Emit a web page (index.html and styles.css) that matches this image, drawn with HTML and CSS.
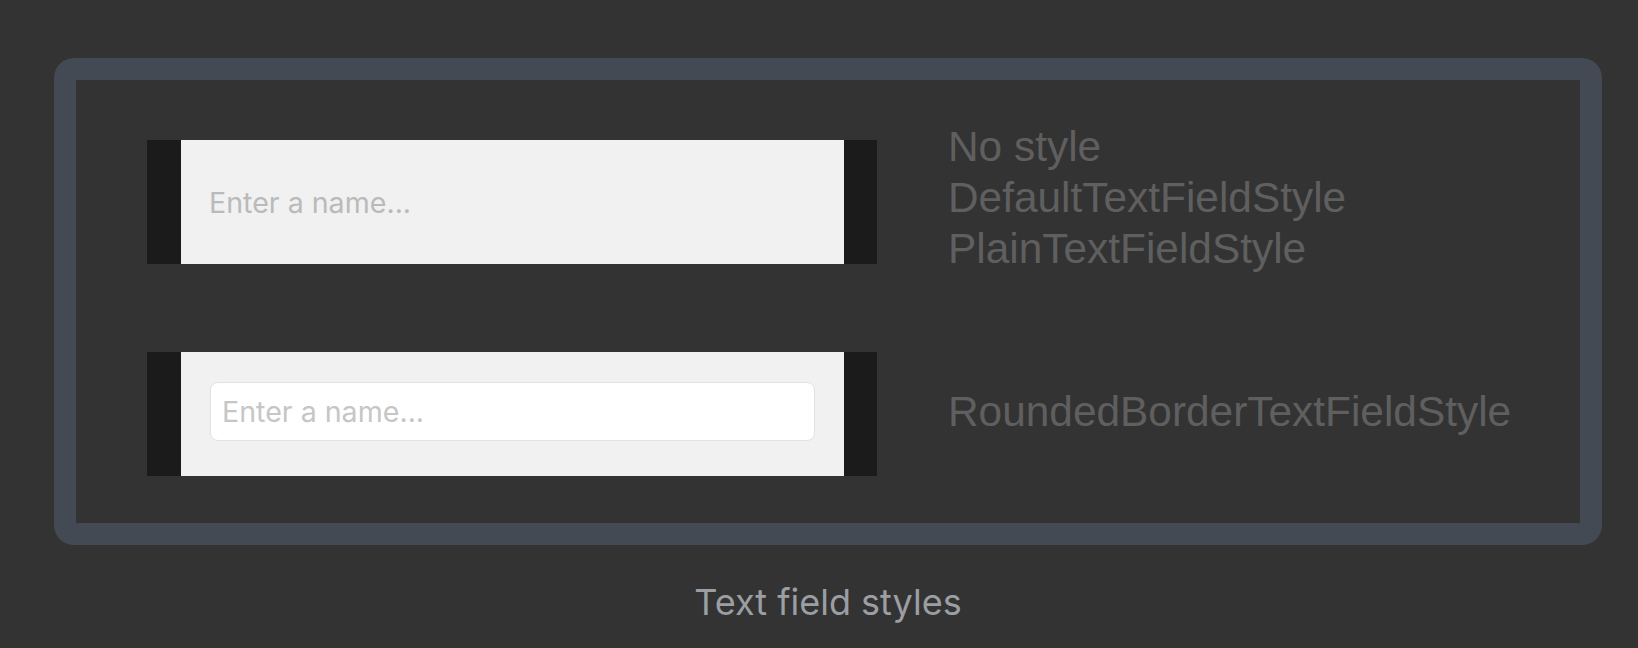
FILE: index.html
```html
<!DOCTYPE html>
<html>
<head>
<meta charset="utf-8">
<link rel="stylesheet" href="styles.css">
</head>
<body>
<div class="page">
  <div class="frame">
    <div class="row row-first">
      <div class="field">
        <div class="field-inner">
          <span class="placeholder">Enter a name...</span>
        </div>
      </div>
      <div class="labels labels-first">
        <div>No style</div>
        <div>DefaultTextFieldStyle</div>
        <div>PlainTextFieldStyle</div>
      </div>
    </div>
    <div class="row row-second">
      <div class="field">
        <div class="field-inner">
          <div class="rounded-box">
            <span class="placeholder placeholder-light">Enter a name...</span>
          </div>
        </div>
      </div>
      <div class="labels labels-second">
        <div>RoundedBorderTextFieldStyle</div>
      </div>
    </div>
  </div>
  <div class="caption">Text field styles</div>
</div>
</body>
</html>
```

FILE: styles.css
```css
html, body {
  margin: 0;
  padding: 0;
  background: #333333;
}

.page {
  width: 1638px;
  height: 648px;
  padding: 58px 0 0 54px;
  box-sizing: border-box;
}

.frame {
  width: 1548px;
  height: 487px;
  box-sizing: border-box;
  border: 22px solid #434a53;
  border-radius: 20px;
  background: #333333;
  padding: 60px 0 0 71px;
  display: flex;
  flex-direction: column;
  gap: 88px;
}

.row {
  display: flex;
  align-items: center;
  gap: 71px;
  height: 124px;
}

.field {
  width: 730px;
  height: 124px;
  background: #1b1b1b;
  padding: 0 33px 0 34px;
  box-sizing: border-box;
  flex: none;
}

.field-inner {
  height: 124px;
  background: #f1f1f1;
  display: flex;
  flex-direction: column;
  justify-content: center;
  padding: 0 28px;
  box-sizing: border-box;
}

.row-second .field-inner {
  justify-content: flex-start;
  padding: 30px 29px 0 29px;
}

.placeholder {
  font-family: Inter, "Liberation Sans", sans-serif;
  font-size: 28.6px;
  color: #bababa;
}

.rounded-box {
  height: 59px;
  box-sizing: border-box;
  background: #ffffff;
  border: 1px solid #e2e2e2;
  border-radius: 8px;
  padding: 0 11px;
  display: flex;
  align-items: center;
}

.placeholder-light {
  color: #c6c6c6;
}

.labels {
  font-family: "Liberation Sans", Arial, sans-serif;
  font-size: 42.4px;
  line-height: 51px;
  color: #5f5f5f;
  white-space: nowrap;
}

.labels-first {
  margin-bottom: 9px;
}

.labels-second {
  margin-bottom: 6px;
}

.caption {
  width: 1548px;
  text-align: center;
  margin-top: 35px;
  font-family: Inter, "Liberation Sans", sans-serif;
  font-size: 36px;
  color: #9b9ea3;
}
```
